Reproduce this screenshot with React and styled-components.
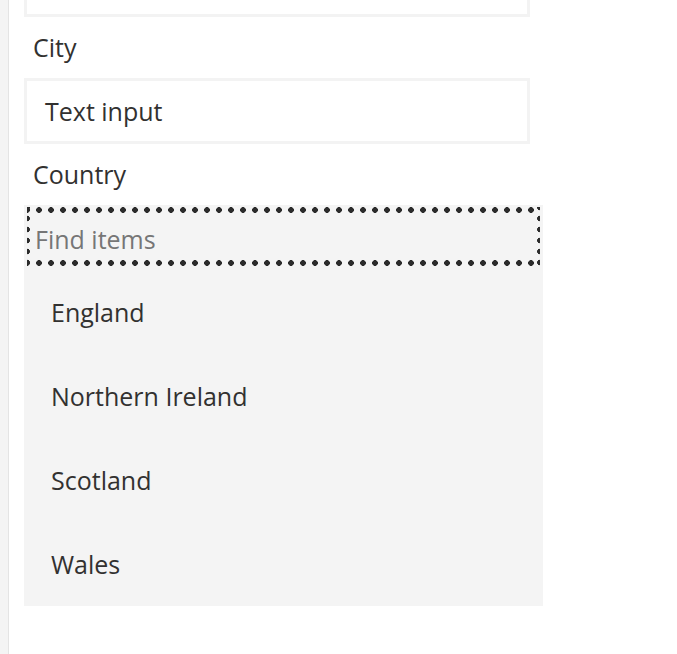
import React from "react";
import styled, { createGlobalStyle } from "styled-components";

const GlobalStyle = createGlobalStyle`
  html, body {
    margin: 0;
    padding: 0;
    background: #ffffff;
    overflow: hidden;
  }
  body {
    font-family: "Open Sans", "Noto Sans", sans-serif;
    color: #323130;
  }
`;

const countries = ["England", "Northern Ireland", "Scotland", "Wales"];

const App = () => {
  return (
    <Page>
      <GlobalStyle />
      <Rail />
      <Form>
        <TextField>
          <FieldValue>Text input</FieldValue>
        </TextField>
        <Label>City</Label>
        <TextField>
          <FieldValue>Text input</FieldValue>
        </TextField>
        <Label>Country</Label>
        <Dropdown>
          <Search>Find items</Search>
          <List>
            {countries.map(name => (
              <Option key={name}>{name}</Option>
            ))}
          </List>
        </Dropdown>
      </Form>
    </Page>
  );
};

const Page = styled.div`
  display: flex;
  min-height: 654px;
`;

const Rail = styled.div`
  flex: 0 0 8px;
  background: #f4f4f4;
  border-right: 1px solid #e4e4e4;
`;

const Form = styled.div`
  display: flex;
  flex-direction: column;
  align-items: flex-start;
  padding-left: 15px;
  margin-top: -49px;
`;

const TextField = styled.div`
  box-sizing: border-box;
  width: 506px;
  height: 66px;
  border: 3px solid #f3f3f3;
  display: flex;
  align-items: center;
  padding-left: 18px;
`;

const FieldValue = styled.span`
  font-size: 25px;
  color: #323130;
`;

const Label = styled.div`
  box-sizing: border-box;
  height: 61px;
  display: flex;
  align-items: center;
  padding: 0 0 2px 9px;
  font-size: 25px;
  color: #323130;
`;

const Dropdown = styled.div`
  width: 519px;
  background: #f4f4f4;
  padding-top: 2px;
`;

const dot = "radial-gradient(circle, #2b2b2b 2.6px, transparent 3.1px)";

const Search = styled.div`
  box-sizing: border-box;
  margin: 0 3px;
  height: 59px;
  display: flex;
  align-items: center;
  padding: 4px 0 0 8px;
  font-size: 25px;
  color: #767676;
  background-image: ${dot}, ${dot}, ${dot}, ${dot};
  background-size: 12px 6px, 12px 6px, 6px 11px, 6px 11px;
  background-repeat: repeat-x, repeat-x, repeat-y, repeat-y;
  background-position: -6px 0, -6px 100%, -3px -5px, right -3px top -5px;
`;

const List = styled.div`
  display: flex;
  flex-direction: column;
  padding-top: 4px;
`;

const Option = styled.div`
  height: 84px;
  display: flex;
  align-items: center;
  padding-left: 27px;
  font-size: 25px;
  color: #323130;
`;

export default App;
